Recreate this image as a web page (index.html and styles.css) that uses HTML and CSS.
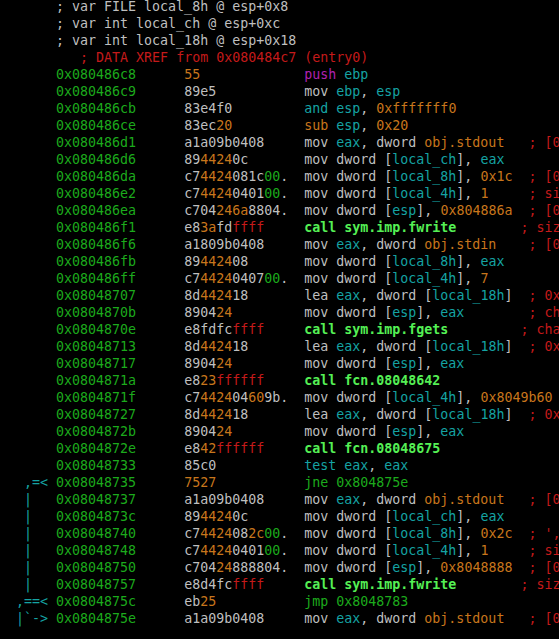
FILE: index.html
```
<!DOCTYPE html>
<html lang="en">
<head>
<meta charset="utf-8">
<title>r2 disassembly</title>
<link rel="stylesheet" href="styles.css">
</head>
<body>
<div class="term">
<div class="ln">       ; var FILE local_8h @ esp+0x8</div>
<div class="ln">       ; var int local_ch @ esp+0xc</div>
<div class="ln">       ; var int local_18h @ esp+0x18</div>
<div class="ln">          <span class="r">; DATA XREF from 0x080484c7 (entry0)</span></div>
<div class="ln">       <span class="a">0x080486c8</span>      <span class="o">55</span>             <span class="m">push</span> <span class="t">ebp</span></div>
<div class="ln">       <span class="a">0x080486c9</span>      89e5           mov <span class="t">ebp</span>, <span class="t">esp</span></div>
<div class="ln">       <span class="a">0x080486cb</span>      83e4f0         <span class="t">and</span> <span class="t">esp</span>, <span class="o">0xfffffff0</span></div>
<div class="ln">       <span class="a">0x080486ce</span>      83ec<span class="o">20</span>         <span class="o">sub</span> <span class="t">esp</span>, <span class="o">0x20</span></div>
<div class="ln">       <span class="a">0x080486d1</span>      a1a09b0408     mov <span class="t">eax</span>, dword <span class="o">obj.stdout</span>   <span class="r">; [0x8049ba0:4]=0</span></div>
<div class="ln">       <span class="a">0x080486d6</span>      89<span class="o">4424</span>0c       mov dword [<span class="t">local_ch</span>], <span class="t">eax</span></div>
<div class="ln">       <span class="a">0x080486da</span>      c7<span class="o">4424</span>081c<span class="a">00</span>.  mov dword [<span class="t">local_8h</span>], <span class="o">0x1c</span>  <span class="r">; [0x1c:4]=-1 ; 28</span></div>
<div class="ln">       <span class="a">0x080486e2</span>      c7<span class="o">4424</span>0401<span class="a">00</span>.  mov dword [<span class="t">local_4h</span>], <span class="o">1</span>     <span class="r">; size_t nitems</span></div>
<div class="ln">       <span class="a">0x080486ea</span>      c704<span class="o">246a</span>8804.  mov dword [<span class="t">esp</span>], <span class="o">0x804886a</span>  <span class="r">; [0x804886a:4]=0x6c6c6548</span></div>
<div class="ln">       <span class="a">0x080486f1</span>      e8<span class="o">3a</span>fd<span class="r">ffff</span>     <span class="c">call sym.imp.fwrite</span>        <span class="r">; size_t fwrite(const void *ptr)</span></div>
<div class="ln">       <span class="a">0x080486f6</span>      a1809b0408     mov <span class="t">eax</span>, dword <span class="o">obj.stdin</span>    <span class="r">; [0x8049b80:4]=0</span></div>
<div class="ln">       <span class="a">0x080486fb</span>      89<span class="o">4424</span>08       mov dword [<span class="t">local_8h</span>], <span class="t">eax</span></div>
<div class="ln">       <span class="a">0x080486ff</span>      c7<span class="o">4424</span>0407<span class="a">00</span>.  mov dword [<span class="t">local_4h</span>], <span class="o">7</span></div>
<div class="ln">       <span class="a">0x08048707</span>      8d<span class="o">4424</span>18       lea <span class="t">eax</span>, dword [<span class="t">local_18h</span>]  <span class="r">; 0x18 ; 24</span></div>
<div class="ln">       <span class="a">0x0804870b</span>      8904<span class="o">24</span>         mov dword [<span class="t">esp</span>], <span class="t">eax</span>        <span class="r">; char *s</span></div>
<div class="ln">       <span class="a">0x0804870e</span>      e8fdfc<span class="r">ffff</span>     <span class="c">call sym.imp.fgets</span>         <span class="r">; char *fgets(char *s)</span></div>
<div class="ln">       <span class="a">0x08048713</span>      8d<span class="o">4424</span>18       lea <span class="t">eax</span>, dword [<span class="t">local_18h</span>]  <span class="r">; 0x18 ; 24</span></div>
<div class="ln">       <span class="a">0x08048717</span>      8904<span class="o">24</span>         mov dword [<span class="t">esp</span>], <span class="t">eax</span></div>
<div class="ln">       <span class="a">0x0804871a</span>      e8<span class="o">23</span><span class="r">ffffff</span>     <span class="c">call fcn.08048642</span></div>
<div class="ln">       <span class="a">0x0804871f</span>      c7<span class="o">4424</span>04<span class="o">60</span>9b.  mov dword [<span class="t">local_4h</span>], <span class="o">0x8049b60</span></div>
<div class="ln">       <span class="a">0x08048727</span>      8d<span class="o">4424</span>18       lea <span class="t">eax</span>, dword [<span class="t">local_18h</span>]  <span class="r">; 0x18 ; 24</span></div>
<div class="ln">       <span class="a">0x0804872b</span>      8904<span class="o">24</span>         mov dword [<span class="t">esp</span>], <span class="t">eax</span></div>
<div class="ln">       <span class="a">0x0804872e</span>      e8<span class="o">42</span><span class="r">ffffff</span>     <span class="c">call fcn.08048675</span></div>
<div class="ln">       <span class="a">0x08048733</span>      85c0           <span class="t">test</span> <span class="t">eax</span>, <span class="t">eax</span></div>
<div class="ln"><span class="t">   ,=&lt; </span><span class="a">0x08048735</span>      <span class="o">7527</span>           <span class="a">jne 0x804875e</span></div>
<div class="ln"><span class="t">   |   </span><span class="a">0x08048737</span>      a1a09b0408     mov <span class="t">eax</span>, dword <span class="o">obj.stdout</span>   <span class="r">; [0x8049ba0:4]=0</span></div>
<div class="ln"><span class="t">   |   </span><span class="a">0x0804873c</span>      89<span class="o">4424</span>0c       mov dword [<span class="t">local_ch</span>], <span class="t">eax</span></div>
<div class="ln"><span class="t">   |   </span><span class="a">0x08048740</span>      c7<span class="o">4424</span>08<span class="o">2c</span><span class="a">00</span>.  mov dword [<span class="t">local_8h</span>], <span class="o">0x2c</span>  <span class="r">; ',' ; 44</span></div>
<div class="ln"><span class="t">   |   </span><span class="a">0x08048748</span>      c7<span class="o">4424</span>0401<span class="a">00</span>.  mov dword [<span class="t">local_4h</span>], <span class="o">1</span>     <span class="r">; size_t nitems</span></div>
<div class="ln"><span class="t">   |   </span><span class="a">0x08048750</span>      c704<span class="o">24</span>888804.  mov dword [<span class="t">esp</span>], <span class="o">0x8048888</span>  <span class="r">; [0x8048888:4]=0x6e6f7257</span></div>
<div class="ln"><span class="t">   |   </span><span class="a">0x08048757</span>      e8d4fc<span class="r">ffff</span>     <span class="c">call sym.imp.fwrite</span>        <span class="r">; size_t fwrite(const void *ptr)</span></div>
<div class="ln"><span class="t">  ,==&lt; </span><span class="a">0x0804875c</span>      eb<span class="o">25</span>           <span class="a">jmp 0x8048783</span></div>
<div class="ln"><span class="t">  |`-&gt; </span><span class="a">0x0804875e</span>      a1a09b0408     mov <span class="t">eax</span>, dword <span class="o">obj.stdout</span>   <span class="r">; [0x8049ba0:4]=0</span></div>
</div>
</body>
</html>
```
FILE: styles.css
```
html, body {
  margin: 0;
  padding: 0;
  background: #000000;
}

.term {
  width: 559px;
  height: 639px;
  overflow: hidden;
  font-family: "DejaVu Sans Mono", "Liberation Mono", monospace;
  font-size: 13.3px;
  line-height: 17px;
  color: #bfbfbf;
  background: #000000;
  padding-top: 0;
  margin-top: -2px;
}

.ln {
  white-space: pre;
  height: 17px;
  overflow: hidden;
}

.a { color: #1caa1c; }
.o { color: #c8761c; }
.t { color: #15a3a3; }
.r { color: #c41a1a; }
.m { color: #b020b0; }
.c { color: #55f055; font-weight: bold; }
```
